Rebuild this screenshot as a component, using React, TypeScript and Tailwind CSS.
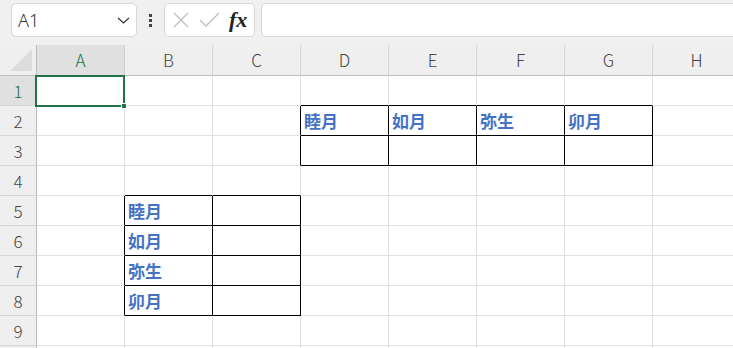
import React from "react";

const COLS = ["A", "B", "C", "D", "E", "F", "G", "H"];
const ROWS = [1, 2, 3, 4, 5, 6, 7, 8, 9, 10];

const cellText: Record<string, string> = {
  D2: "睦月",
  E2: "如月",
  F2: "弥生",
  G2: "卯月",
  B5: "睦月",
  B6: "如月",
  B7: "弥生",
  B8: "卯月",
};

function inBox(c: number, r: number) {
  if (c >= 3 && c <= 6 && r >= 2 && r <= 3) return true;
  if (c >= 1 && c <= 2 && r >= 5 && r <= 8) return true;
  return false;
}

const FONT = { fontFamily: '"Noto Sans CJK JP", "Noto Sans", sans-serif' };

export default function App() {
  return (
    <div className="w-[733px] h-[348px] overflow-hidden bg-white relative" style={FONT}>
      {/* Top bar */}
      <div className="h-[45px] bg-[#f0f0f0] flex items-start pt-[3px] pl-[11px]">
        <div className="w-[126px] h-[34px] bg-white border border-[#d6d6d6] rounded-[5px] flex items-center pl-[6px] pr-[5px] justify-between">
          <span className="text-[18px] text-[#333]" style={{ fontFamily: '"Noto Sans", sans-serif', fontWeight: 300 }}>A1</span>
          <svg width="15" height="14" viewBox="0 0 15 14">
            <path d="M2 5 L7.5 10 L13 5" fill="none" stroke="#333" strokeWidth="1.2" />
          </svg>
        </div>
        <div className="w-[27px] h-[34px] flex flex-col items-center justify-center gap-[2px]">
          <div className="w-[3px] h-[3px] bg-[#444]" />
          <div className="w-[3px] h-[3px] bg-[#444]" />
          <div className="w-[3px] h-[3px] bg-[#444]" />
        </div>
        <div className="w-[91px] h-[34px] bg-white border border-[#d6d6d6] rounded-[5px] flex items-center pl-[6px]">
          <svg width="18" height="18" viewBox="0 0 18 18" className="ml-[1px]">
            <path d="M2 2 L16 16 M16 2 L2 16" stroke="#bdbdbd" strokeWidth="1.3" fill="none" />
          </svg>
          <svg width="22" height="18" viewBox="0 0 22 18" className="ml-[9px]">
            <path d="M1 9 L7 15 L20 2" stroke="#bdbdbd" strokeWidth="1.3" fill="none" />
          </svg>
          <span
            className="ml-[8px] text-[22px] italic text-[#222] leading-none"
            style={{ fontFamily: '"Liberation Serif", serif', fontWeight: 600 }}
          >
            fx
          </span>
        </div>
        <div className="ml-[6px] flex-1 h-[34px] bg-white border border-[#d6d6d6] rounded-l-[5px] border-r-0" />
      </div>

      {/* Grid */}
      <div className="grid grid-cols-[37px_repeat(8,88px)] grid-rows-[31px_repeat(10,30px)]">
        <div className="bg-[#efefef] border-r border-b border-[#bdbdbd] relative">
          <div className="absolute right-[4px] bottom-[4px] w-0 h-0 border-l-[22px] border-l-transparent border-b-[22px] border-b-[#dcdcdc]" />
        </div>
        {COLS.map((c, i) => (
          <div
            key={c}
            className={
              "flex items-center justify-center text-[17px] border-b border-r " +
              (i === 0
                ? "bg-[#e0e0e0] text-[#17704a] border-b-[#bdbdbd] border-r-[#d0d0d0]"
                : "bg-[#efefef] text-[#444] border-b-[#bdbdbd] border-r-[#d6d6d6]")
            }
            style={{ fontWeight: 300 }}
          >
            {c}
          </div>
        ))}
        {ROWS.map((r) => (
          <React.Fragment key={r}>
            <div
              className={
                "flex items-center justify-center text-[17px] border-r border-b border-r-[#bdbdbd] border-b-[#d6d6d6] " +
                (r === 1 ? "bg-[#e0e0e0] text-[#17704a]" : "bg-[#efefef] text-[#444]")
              }
              style={{ fontWeight: 300 }}
            >
              {r < 10 ? r : ""}
            </div>
            {COLS.map((c, ci) => {
              const rightBlack = inBox(ci, r) || inBox(ci + 1, r);
              const bottomBlack = inBox(ci, r) || inBox(ci, r + 1);
              const txt = cellText[c + r];
              return (
                <div
                  key={c + r}
                  className={
                    "border-r border-b flex items-center pl-[3px] " +
                    (rightBlack ? "border-r-black " : "border-r-[#e1e1e1] ") +
                    (bottomBlack ? "border-b-black" : "border-b-[#e1e1e1]")
                  }
                >
                  {txt && (
                    <span className="text-[17px] font-bold text-[#4472c4] leading-none">{txt}</span>
                  )}
                </div>
              );
            })}
          </React.Fragment>
        ))}
      </div>

      {/* Selection overlay on A1 */}
      <div className="absolute left-[35px] top-[75px] w-[90px] h-[32px] border-2 border-[#217346]" />
      <div className="absolute left-[121px] top-[103px] w-[6px] h-[6px] bg-[#217346] border border-white" />
    </div>
  );
}
